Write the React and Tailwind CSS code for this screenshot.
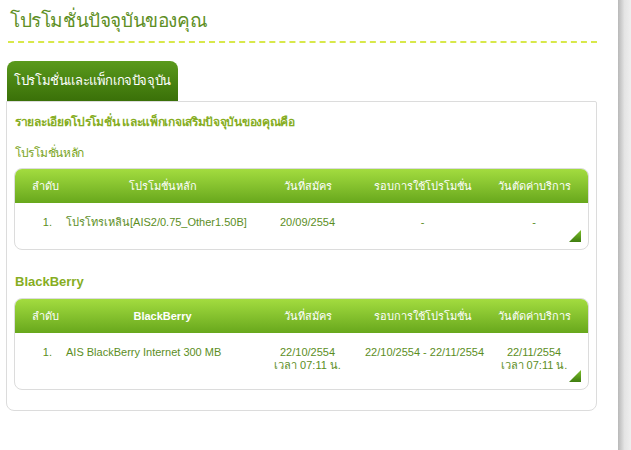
import React from 'react';

const mainRows = [
  { no: '1.', name: 'โปรโทรเหลิน[AIS2/0.75_Other1.50B]', start: ['20/09/2554'], cycle: '-', cut: ['-'] },
];

const bbRows = [
  {
    no: '1.',
    name: 'AIS BlackBerry Internet 300 MB',
    start: ['22/10/2554', 'เวลา 07:11 น.'],
    cycle: '22/10/2554 - 22/11/2554',
    cut: ['22/11/2554', 'เวลา 07:11 น.'],
  },
];

const Corner = () => (
  <svg width="12" height="12" viewBox="0 0 12 12" className="absolute right-[7px] bottom-[7px]">
    <defs>
      <linearGradient id="cg" x1="0" y1="0" x2="0" y2="1">
        <stop offset="0" stopColor="#7cc02a" />
        <stop offset="1" stopColor="#3f7d10" />
      </linearGradient>
    </defs>
    <polygon points="12,0 12,12 0,12" fill="url(#cg)" />
  </svg>
);

const PromoTable = ({ title, rows, tall }) => (
  <div className="relative border border-[#dcdcdc] rounded-[8px] overflow-hidden font-['Liberation_Sans',sans-serif] whitespace-nowrap">
    <div className="grid grid-cols-[60px_175px_115px_115px_1fr] h-[34px] items-center text-white text-[11px] bg-gradient-to-b from-[#a3dc3f] to-[#68a81c]">
      <div className="text-center">ลำดับ</div>
      <div className={`text-center ${title === 'BlackBerry' ? 'font-bold' : ''}`}>{title}</div>
      <div className="text-center">วันที่สมัคร</div>
      <div className="text-center">รอบการใช้โปรโมชั่น</div>
      <div className="text-center">วันตัดค่าบริการ</div>
    </div>
    {rows.map((r, i) => (
      <div
        key={i}
        className={`grid grid-cols-[51px_184px_115px_115px_1fr] text-[11px] text-[#5c8e1e] leading-[13px] pt-[13px] ${tall ? 'h-[56px]' : 'h-[46px]'}`}
      >
        <div className="text-right pr-[14px]">{r.no}</div>
        <div>{r.name}</div>
        <div className="text-center">
          {r.start.map((s) => <div key={s}>{s}</div>)}
        </div>
        <div className="text-center">{r.cycle}</div>
        <div className="text-center">
          {r.cut.map((s) => <div key={s}>{s}</div>)}
        </div>
      </div>
    ))}
    <Corner />
  </div>
);

export default function App() {
  return (
    <div className="w-[631px] h-[450px] bg-white flex font-['Liberation_Sans',sans-serif] overflow-hidden">
      <div className="w-[618px] pl-[6px] pr-[21px]">
        <h1 className="pl-[4px] pt-[7px] text-[19px] leading-[28px] text-[#5e8f25] font-light tracking-[-0.4px] whitespace-nowrap">
          โปรโมชั่นปัจจุบันของคุณ
        </h1>
        <div className="ml-[2px] mt-[6px] border-t-2 border-dashed border-[#d8e84a]" />

        <div className="mt-[18px] w-[171px] h-[40px] ml-[1px] rounded-t-[8px] bg-gradient-to-b from-[#5a9a1c] to-[#3a7008] flex items-center justify-center text-white text-[13px] tracking-[-0.4px] whitespace-nowrap">
          โปรโมชั่นและแพ็กเกจปัจจุบัน
        </div>

        <div className="border border-[#dcdcdc] rounded-b-[8px] rounded-tr-[2px] px-[7px] pt-[11px] pb-[20px]">
          <div className="text-[12px] leading-[18px] font-bold text-[#86ad22] pl-[1px] tracking-[-0.3px] whitespace-nowrap">
            รายละเอียดโปรโมชั่น และแพ็กเกจเสริมปัจจุบันของคุณคือ
          </div>
          <div className="mt-[13px] text-[12px] leading-[18px] text-[#7aa51c] pl-[1px] tracking-[-0.3px]">
            โปรโมชั่นหลัก
          </div>
          <div className="mt-[6px]">
            <PromoTable title="โปรโมชั่นหลัก" rows={mainRows} />
          </div>
          <div className="mt-[23px] text-[13px] leading-[18px] text-[#86ad22] font-bold pl-[1px]">
            BlackBerry
          </div>
          <div className="mt-[7px]">
            <PromoTable title="BlackBerry" rows={bbRows} tall />
          </div>
        </div>
      </div>
      <div className="flex-1 bg-gradient-to-r from-[#b8b8b8] via-[#e4e4e4] to-[#efefef]" />
    </div>
  );
}
